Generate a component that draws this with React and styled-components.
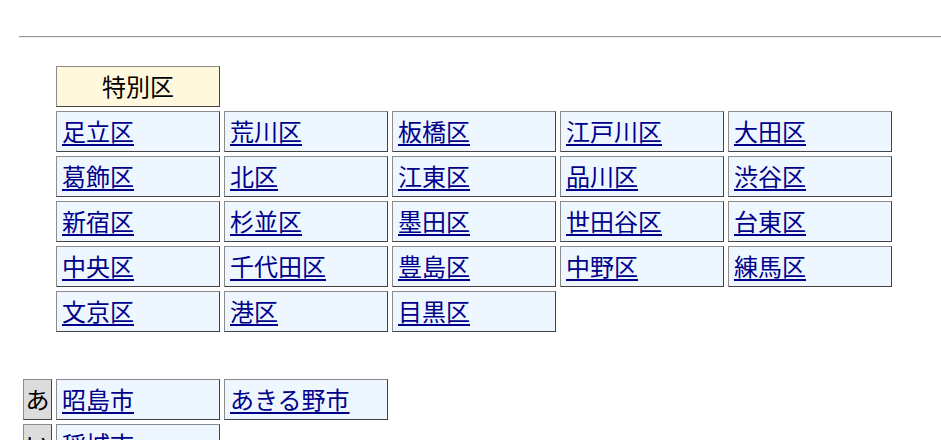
import React from 'react';
import styled, { createGlobalStyle } from 'styled-components';

const GlobalStyle = createGlobalStyle`
  html, body {
    margin: 0;
    padding: 0;
    background: #fff;
    font-family: "Noto Sans CJK JP", "Noto Sans", sans-serif;
  }
`;

const Page = styled.div`
  padding: 36px 0 0 19px;
`;

const Rule = styled.hr`
  margin: 0 0 24px 0;
  border: none;
  border-top: 1px solid #9a9a9a;
  border-bottom: 1px solid #eeeeee;
  height: 0;
`;

const Grid = styled.div`
  display: grid;
  grid-template-columns: 29px repeat(5, 164px);
  grid-auto-rows: 41px;
  gap: 4px;
  padding: 4px;
  margin-bottom: ${p => p.$after || 0}px;
`;

const Cell = styled.div`
  box-sizing: border-box;
  border: 1px solid;
  border-color: #8c8c8c #444 #444 #8c8c8c;
  font-size: 24px;
  line-height: 38px;
  white-space: nowrap;
  overflow: hidden;
`;

const Head = styled(Cell)`
  grid-column: 2;
  background: #fff8dc;
  color: #000;
  text-align: center;
`;

const Kana = styled(Cell)`
  grid-column: 1;
  background: #dcdcdc;
  color: #000;
  text-align: center;
`;

const Item = styled(Cell)`
  background: #eef7ff;
  padding: 0 0 0 5px;
  grid-column: ${p => (p.$first ? 2 : 'auto')};

  a {
    color: #00008b;
    text-decoration: underline;
    text-underline-offset: 3px;
  }
`;

const wards = [
  ['足立区', '荒川区', '板橋区', '江戸川区', '大田区'],
  ['葛飾区', '北区', '江東区', '品川区', '渋谷区'],
  ['新宿区', '杉並区', '墨田区', '世田谷区', '台東区'],
  ['中央区', '千代田区', '豊島区', '中野区', '練馬区'],
  ['文京区', '港区', '目黒区'],
];

const cities = [
  ['あ', ['昭島市', 'あきる野市']],
  ['い', ['稲城市']],
];

const App = () => (
  <>
    <GlobalStyle />
    <Page>
      <Rule />
      <Grid $after={39}>
        <Head>特別区</Head>
        {wards.map(row =>
          row.map((w, i) => (
            <Item key={w} $first={i === 0}>
              <a href="#">{w}</a>
            </Item>
          ))
        )}
      </Grid>
      <Grid>
        {cities.map(([k, list]) => (
          <React.Fragment key={k}>
            <Kana>{k}</Kana>
            {list.map((c, i) => (
              <Item key={c} $first={i === 0}>
                <a href="#">{c}</a>
              </Item>
            ))}
          </React.Fragment>
        ))}
      </Grid>
    </Page>
  </>
);

export default App;
